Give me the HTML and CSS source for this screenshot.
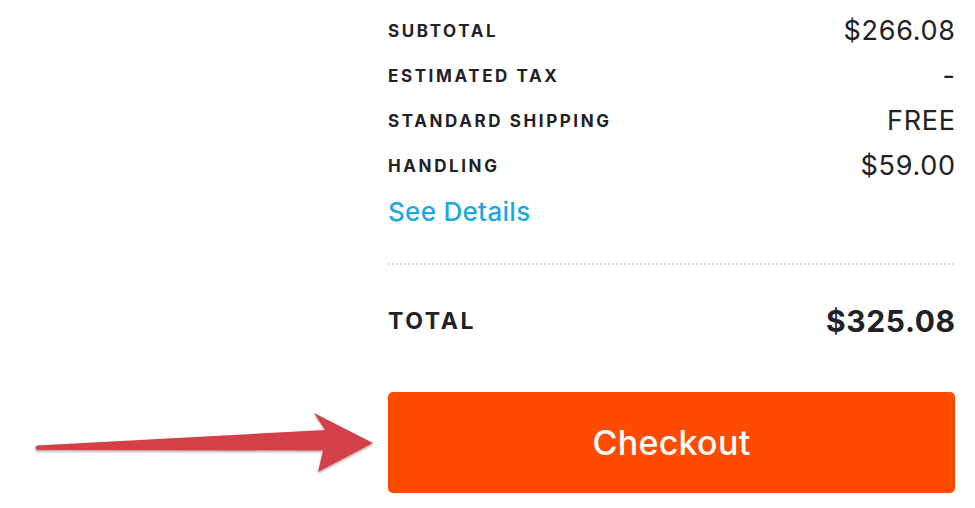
FILE: index.html
```html
<!DOCTYPE html>
<html>
<head>
<meta charset="utf-8">
<link rel="stylesheet" href="styles.css">
</head>
<body>
<div class="page">
  <div class="summary">
    <div class="row"><span class="label">SUBTOTAL</span><span class="value">$266.08</span></div>
    <div class="row"><span class="label">ESTIMATED TAX</span><span class="value">-</span></div>
    <div class="row"><span class="label">STANDARD SHIPPING</span><span class="value">FREE</span></div>
    <div class="row"><span class="label">HANDLING</span><span class="value">$59.00</span></div>
    <div class="details-row"><a class="details" href="#">See Details</a></div>
    <div class="divider"></div>
    <div class="total-row"><span class="total-label">TOTAL</span><span class="total-value">$325.08</span></div>
    <button class="checkout">Checkout</button>
  </div>
  <svg class="arrow" width="380" height="90" viewBox="0 0 380 90">
    <defs>
      <filter id="sh" x="-10%" y="-30%" width="120%" height="160%">
        <feDropShadow dx="0" dy="1.5" stdDeviation="1.2" flood-color="#000" flood-opacity="0.35"/>
      </filter>
    </defs>
    <path d="M37 45.5 Q34 47.5 37 50 L323 50.5 L318 72 L373 43 L314 13 L325 30 L37 45.5 Z" fill="#d34047" filter="url(#sh)"/>
  </svg>
</div>
</body>
</html>
```
FILE: styles.css
```css
html, body {
  margin: 0;
  padding: 0;
  background: #fff;
}
body {
  font-family: "Inter", "Lato", "Liberation Sans", sans-serif;
  color: #212126;
}
.page {
  position: relative;
  width: 975px;
  height: 508px;
  overflow: hidden;
}
.summary {
  margin-left: 388px;
  width: 567px;
  padding-top: 8px;
}
.row {
  height: 45px;
  display: flex;
  align-items: center;
  justify-content: space-between;
}
.label {
  font-size: 17px;
  font-weight: 700;
  letter-spacing: 2.6px;
}
.value {
  font-size: 27px;
  font-weight: 400;
  letter-spacing: 0.7px;
  margin-right: -0.7px;
}
.details-row {
  height: 46px;
  display: flex;
  align-items: center;
}
.details {
  color: #1ba8e1;
  font-size: 26px;
  text-decoration: none;
  font-weight: 500;
  letter-spacing: 0.3px;
}
.divider {
  margin-top: 29px;
  height: 2px;
  background-image: linear-gradient(to right, #dcdcdc 0 2px, transparent 2px 4px);
  background-size: 4px 2px;
}
.total-row {
  margin-top: 35px;
  height: 42px;
  display: flex;
  align-items: center;
  justify-content: space-between;
}
.total-label {
  font-size: 23px;
  font-weight: 700;
  letter-spacing: 2.6px;
}
.total-value {
  font-size: 30px;
  font-weight: 700;
  letter-spacing: 0.6px;
  margin-right: -0.6px;
}
.checkout {
  display: block;
  margin-top: 50px;
  width: 567px;
  height: 101px;
  border: none;
  border-radius: 5px;
  background: #ff4b00;
  color: #fff;
  font-family: "Inter", "Lato", "Liberation Sans", sans-serif;
  font-size: 34px;
  font-weight: 500;
  letter-spacing: 0.3px;
  padding: 0;
  cursor: pointer;
}
.arrow {
  position: absolute;
  left: 0;
  top: 400px;
}
```
